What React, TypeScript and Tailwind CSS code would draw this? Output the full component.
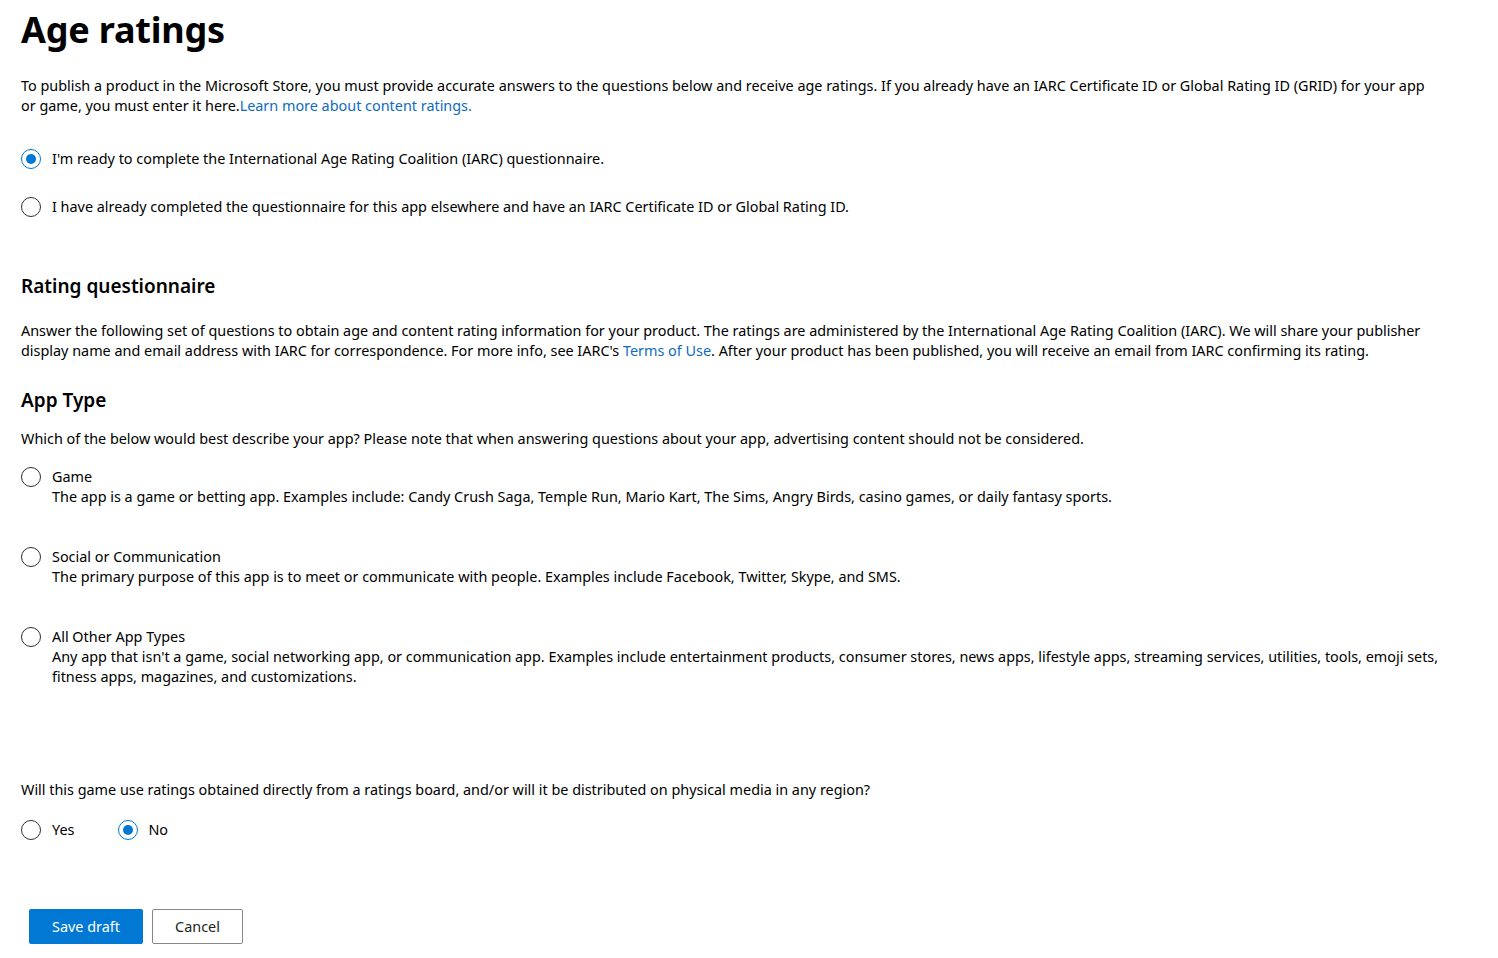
import { useState } from "react";

const Radio = ({ checked, onClick }: { checked: boolean; onClick?: () => void }) => (
  <span
    onClick={onClick}
    className={`flex h-5 w-5 shrink-0 cursor-pointer items-center justify-center rounded-full border ${
      checked ? "border-[#0078d4]" : "border-[#323130]"
    }`}
  >
    {checked && <span className="h-[10px] w-[10px] rounded-full bg-[#0078d4]" />}
  </span>
);

const appTypes = [
  {
    id: "game",
    title: "Game",
    text: "The app is a game or betting app. Examples include: Candy Crush Saga, Temple Run, Mario Kart, The Sims, Angry Birds, casino games, or daily fantasy sports.",
  },
  {
    id: "social",
    title: "Social or Communication",
    text: "The primary purpose of this app is to meet or communicate with people. Examples include Facebook, Twitter, Skype, and SMS.",
  },
  {
    id: "other",
    title: "All Other App Types",
    text: "Any app that isn't a game, social networking app, or communication app. Examples include entertainment products, consumer stores, news apps, lifestyle apps, streaming services, utilities, tools, emoji sets, fitness apps, magazines, and customizations.",
  },
];

export default function App() {
  const [mode, setMode] = useState("questionnaire");
  const [appType, setAppType] = useState("");
  const [board, setBoard] = useState("no");

  return (
    <main className="min-h-screen bg-white pl-[21px] pr-[40px] text-[14.4px] leading-5 text-[#000] font-['Segoe_UI','Noto_Sans',sans-serif]">
      <div className="max-w-[1419px]">
        <h1 className="pt-[3px] text-[36px] font-bold leading-[54px] tracking-[-0.2px]">Age ratings</h1>

        <p className="mt-[19px] max-w-[1413px]">
          To publish a product in the Microsoft Store, you must provide accurate answers to the questions below and
          receive age ratings. If you already have an IARC Certificate ID or Global Rating ID (GRID) for your app or
          game, you must enter it here.
          <a href="#" className="inline-block text-[#0f6cbd]">
            Learn more about content ratings.
          </a>
        </p>

        <div className="mt-[33px] flex flex-col gap-[28px]">
          <label className="flex items-center gap-[11px]" onClick={() => setMode("questionnaire")}>
            <Radio checked={mode === "questionnaire"} />
            <span>I'm ready to complete the International Age Rating Coalition (IARC) questionnaire.</span>
          </label>
          <label className="flex items-center gap-[11px]" onClick={() => setMode("existing")}>
            <Radio checked={mode === "existing"} />
            <span>
              I have already completed the questionnaire for this app elsewhere and have an IARC Certificate ID or
              Global Rating ID.
            </span>
          </label>
        </div>

        <h2 className="mt-[55px] text-[19px] font-semibold leading-7">Rating questionnaire</h2>
        <p className="mt-[21px]">
          Answer the following set of questions to obtain age and content rating information for your product. The
          ratings are administered by the International Age Rating Coalition (IARC). We will share your publisher
          display name and email address with IARC for correspondence. For more info, see IARC's{" "}
          <a href="#" className="inline-block text-[#0f6cbd]">
            Terms of Use
          </a>
          . After your product has been published, you will receive an email from IARC confirming its rating.
        </p>

        <h2 className="mt-[25px] text-[19px] font-semibold leading-7">App Type</h2>
        <p className="mt-[15px]">
          Which of the below would best describe your app? Please note that when answering questions about your app,
          advertising content should not be considered.
        </p>

        <div className="mt-[18px] flex flex-col gap-[40px]">
          {appTypes.map((t) => (
            <label key={t.id} className="flex flex-col" onClick={() => setAppType(t.id)}>
              <span className="flex items-center gap-[11px]">
                <Radio checked={appType === t.id} />
                <span>{t.title}</span>
              </span>
              <span className="pl-[31px]">{t.text}</span>
            </label>
          ))}
        </div>

        <p className="mt-[93px]">
          Will this game use ratings obtained directly from a ratings board, and/or will it be distributed on physical
          media in any region?
        </p>
        <div className="mt-[20px] flex items-center gap-[44px]">
          <label className="flex items-center gap-[11px]" onClick={() => setBoard("yes")}>
            <Radio checked={board === "yes"} />
            <span>Yes</span>
          </label>
          <label className="flex items-center gap-[10px]" onClick={() => setBoard("no")}>
            <Radio checked={board === "no"} />
            <span>No</span>
          </label>
        </div>

        <div className="mt-[69px] flex gap-[9px] pl-[8px] pb-[14px]">
          <button className="h-[35px] w-[114px] rounded-[2px] bg-[#0078d4] text-white">Save draft</button>
          <button className="h-[35px] w-[91px] rounded-[2px] border border-[#8a8886] bg-white text-[#201f1e]">
            Cancel
          </button>
        </div>
      </div>
    </main>
  );
}
